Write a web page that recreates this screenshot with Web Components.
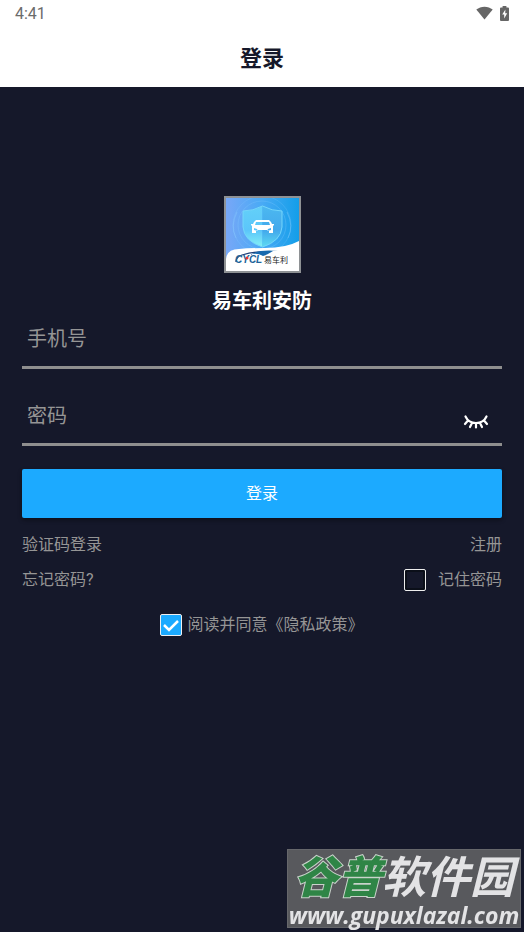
<!DOCTYPE html>
<html lang="zh-CN">
<head>
<meta charset="utf-8">
<meta name="viewport" content="width=device-width, initial-scale=1">
<title>登录</title>
<style>
  body {
    margin: 0;
    min-height: 100vh;
    background: #15182a;
    color: #959595;
    font: 16px/24px Roboto, "Noto Sans CJK SC", sans-serif;
  }
</style>
</head>
<body>
<login-page>
  <status-bar slot="top" time="4:41"></status-bar>
  <title-bar slot="top">登录</title-bar>
  <brand-logo>易车利安防</brand-logo>
  <text-field type="tel" label="手机号"></text-field>
  <text-field type="password" label="密码"></text-field>
  <primary-button>登录</primary-button>
  <link-row>
    <nav-link href="#code">验证码登录</nav-link>
    <nav-link href="#register">注册</nav-link>
  </link-row>
  <link-row>
    <nav-link href="#forgot">忘记密码?</nav-link>
    <check-box style="--gap: 12px">记住密码</check-box>
  </link-row>
  <link-row class="agree" center>
    <check-box checked>阅读并同意<nav-link href="#privacy">《隐私政策》</nav-link></check-box>
  </link-row>
</login-page>
<site-badge></site-badge>

<script>
(function () {
  class BaseElement extends HTMLElement {
    connectedCallback() {
      if (this.shadowRoot) return;
      this.attachShadow({mode: 'open'}).innerHTML = this.render().trim();
    }
  }

  class LoginPage extends BaseElement {
    render() {
      return `
        <style>
          :host { display: block; }
          header { background: #fff; color: #15182a; }
          main { display: flex; flex-direction: column; padding: 109px 22px 24px; }
          ::slotted(primary-button) { margin: 23px 0 4px; }
          ::slotted(link-row) { margin-top: 11px; }
          ::slotted(link-row.agree) { margin-top: 21px; }
          ::slotted(text-field[type="password"]) { margin-top: 22px; }
        </style>
        <header><slot name="top"></slot></header>
        <main><slot></slot></main>`;
    }
  }

  class StatusBar extends BaseElement {
    render() {
      return `
        <style>
          :host { display: flex; align-items: center; justify-content: space-between;
                  height: 28px; padding: 0 15px; color: #6b6b6b; }
          .icons { display: flex; align-items: center; gap: 7px; height: 26px; align-self: flex-start; }
          svg { display: block; }
        </style>
        <span>${this.getAttribute('time')}</span>
        <div class="icons">
          <svg width="17" height="14" viewBox="0 0 17 14" aria-hidden="true">
            <path d="M.3 3.6C2.6 1.7 5.4.7 8.5.7s5.9 1 8.2 2.9L8.5 13.6Z" fill="#666"/>
          </svg>
          <svg width="9" height="15" viewBox="0 0 9 15" aria-hidden="true">
            <path d="M2.6 0h3.8v1.5H8q1 0 1 1V14q0 1-1 1H1q-1 0-1-1V2.500q0-1 1-1h1.600Z" fill="#666"/>
            <path d="M5.400 3.600 2.200 8.600h2v4l3-5.300H5.200Z" fill="#fff"/>
          </svg>
        </div>`;
    }
  }

  class TitleBar extends BaseElement {
    render() {
      return `
        <style>
          :host { display: block; }
          h1 { margin: 0; padding-top: 2px; font-size: 22px; line-height: 57px; font-weight: 700; text-align: center; }
        </style>
        <h1><slot></slot></h1>`;
    }
  }

  class BrandLogo extends BaseElement {
    render() {
      return `
        <style>
          :host { display: flex; flex-direction: column; align-items: center; gap: 15px; color: #fff; }
          svg { display: block; border: 2px solid #8e9194; }
          h2 { margin: 0; font-size: 20px; line-height: 26px; font-weight: 700; }
        </style>
        <svg width="73" height="73" viewBox="0 0 73 73" aria-hidden="true">
          <defs>
            <linearGradient id="sky"><stop stop-color="#78a7f7"/><stop offset=".5" stop-color="#48aaf5"/><stop offset="1" stop-color="#139ee9"/></linearGradient>
            <linearGradient id="left" x2="0" y2="1"><stop stop-color="#63d0f8"/><stop offset=".6" stop-color="#5cc6fa"/><stop offset="1" stop-color="#83f1f5"/></linearGradient>
            <linearGradient id="right" x2="0" y2="1"><stop stop-color="#4cb8f0"/><stop offset=".6" stop-color="#43a9ec"/><stop offset="1" stop-color="#5cdaf2"/></linearGradient>
          </defs>
          <path fill="url(#sky)" d="M0 0h73v73H0z"/>
          <g fill="none" stroke="#8bd0ff">
            <circle cx="36" cy="27" r="24" opacity=".25"/>
            <circle cx="36" cy="27" r="29" opacity=".2"/>
            <path d="M11 14Q4 28 10 40M61 14q7 14 1 26" opacity=".4"/>
          </g>
          <path fill="url(#left)" d="M36.500 8Q27 13 17 13v16q1 14 19.500 20Z"/>
          <path fill="url(#right)" d="M36.500 8Q46 13 56 13v16q-1 14-19.500 20Z"/>
          <path d="M36.500 8Q27 13 17 13v16q1 14 19.500 20Q55 43 56 29V13q-10 0-19.500-5Z" fill="none" stroke="#74d6fa"/>
          <path fill="#fff" fill-rule="evenodd" d="m28 24 2-2h13l2 2 1 2h2v1l-1 1v7h-4v-2H30v2h-4v-7l-1-1v-1h2Zm2 0-1 3h15l-1-3Zm-2 6v2l4 1-1-2Zm17 0v2l-4 1 1-2ZM32 32h9v1h-9Z"/>
          <path fill="#fff" d="M0 73V61q1-10 13-10 10-1 26-1 21 0 34-7v30Z"/>
          <path fill="none" stroke="#1d3f77" stroke-width="1.300" d="M10 64q0-5 6-7 9-3 18-3h8"/>
          <path fill="#1769ae" d="M24 57q9-6 28-4h-5q-6 4-10 5-7-4-13-1Z"/>
          <text x="9" y="65" font-family="Liberation Sans, sans-serif" font-size="10" font-style="italic" font-weight="700" fill="#20649a">CYCL</text>
          <circle cx="21" cy="60" r="1.500" fill="#e33"/>
          <text x="38" y="65" font-family="Noto Sans CJK SC, sans-serif" font-size="8" fill="#222">易车利</text>
        </svg>
        <h2><slot></slot></h2>`;
    }
  }

  class TextField extends BaseElement {
    render() {
      const type = this.getAttribute('type') || 'text';
      const label = this.getAttribute('label');
      // closed eye, toggles the password
      const eye = `
        <button type="button" aria-label="显示密码">
          <svg width="26" height="16" viewBox="0 0 26 16" fill="none" stroke="#fff" stroke-width="2.200" stroke-linecap="round" aria-hidden="true">
            <path d="M2.500 1.500Q5.500 8 13 8t10.500-6.500M5 5.500 2 9M9 8l-2 4M13 8.500v4M17 8l2 4M21 5.500l3 3.500"/>
          </svg>
        </button>`;
      return `
        <style>
          :host { display: block; }
          .box { display: flex; align-items: center; height: 52px; border-bottom: 3px solid #8e8e8e; }
          input { flex: 1; min-width: 0; padding: 0 5px 2px; border: 0; outline: 0; background: none;
                  color: #fff; font: inherit; font-size: 20px; line-height: 28px; }
          input::placeholder { color: #959595; opacity: 1; }
          button { display: flex; padding: 11px 13px 0; border: 0; background: none; cursor: pointer; }
        </style>
        <div class="box">
          <input type="${type}" placeholder="${label}" aria-label="${label}">
          ${type === 'password' ? eye : ''}
        </div>`;
    }
    connectedCallback() {
      super.connectedCallback();
      const button = this.shadowRoot.querySelector('button');
      if (!button) return;
      const input = this.shadowRoot.querySelector('input');
      button.onclick = () => {
        input.type = input.type === 'password' ? 'text' : 'password';
      };
    }
  }

  class PrimaryButton extends BaseElement {
    render() {
      return `
        <style>
          :host { display: block; }
          button { display: block; width: 100%; height: 49px; border: 0; border-radius: 2px; background: #1caaff;
                   color: #fff; font: inherit; box-shadow: 0 2px 4px #0006; cursor: pointer; }
        </style>
        <button type="button"><slot></slot></button>`;
    }
  }

  class LinkRow extends BaseElement {
    render() {
      return `
        <style>
          :host { display: flex; align-items: center; justify-content: space-between; min-height: 24px; }
          :host([center]) { justify-content: center; }
        </style>
        <slot></slot>`;
    }
  }

  class NavLink extends BaseElement {
    render() {
      return `<style>
          :host { display: inline; }
          a { color: inherit; text-decoration: none; }
        </style><a href="${this.getAttribute('href')}"><slot></slot></a>`;
    }
  }

  class CheckBox extends BaseElement {
    render() {
      return `
        <style>
          :host { display: block; }
          label { display: flex; align-items: center; gap: var(--gap, 5px); }
          .mark { display: grid; }
          .mark > * { grid-area: 1 / 1; }
          input { appearance: none; box-sizing: border-box; width: 22px; height: 22px; margin: 0;
                  border: 1px solid #eee; border-radius: 2px; box-shadow: inset 0 0 0 2px #0b0f19; }
          input:checked { background: #1caaff; box-shadow: none; }
          svg { display: none; pointer-events: none; }
          input:checked + svg { display: block; }
        </style>
        <label>
          <span class="mark">
            <input type="checkbox" ${this.hasAttribute('checked') ? 'checked' : ''}>
            <svg width="22" height="22" viewBox="0 0 22 22" aria-hidden="true">
              <path d="m4 11 5 5 9-9" fill="none" stroke="#fff" stroke-width="2.500"/>
            </svg>
          </span>
          <span><slot></slot></span>
        </label>`;
    }
  }

  // download site's mark, floats over the page corner
  class SiteBadge extends BaseElement {
    render() {
      return `
        <style>
          :host { position: fixed; right: 3px; bottom: 4px; box-sizing: border-box; width: 234px; height: 79px;
                  background: #58595d; border: 1px solid #66676b; color: #e3e3e5; white-space: nowrap;
                  display: flex; flex-direction: column; align-items: center; }
          .name { font: italic 700 44px/56px "Liberation Sans", "Noto Sans CJK SC", sans-serif; }
          .name b { color: #2f8546; -webkit-text-stroke: 2px #c9d3cb; paint-order: stroke fill; }
          .url { font: italic 700 23px/18px "Open Sans", sans-serif; }
        </style>
        <div class="name"><b>谷普</b>软件园</div>
        <div class="url">www.gupuxlazal.com</div>`;
    }
  }

  customElements.define('login-page', LoginPage);
  customElements.define('status-bar', StatusBar);
  customElements.define('title-bar', TitleBar);
  customElements.define('brand-logo', BrandLogo);
  customElements.define('text-field', TextField);
  customElements.define('primary-button', PrimaryButton);
  customElements.define('link-row', LinkRow);
  customElements.define('nav-link', NavLink);
  customElements.define('check-box', CheckBox);
  customElements.define('site-badge', SiteBadge);
})();
</script>
</body>
</html>
